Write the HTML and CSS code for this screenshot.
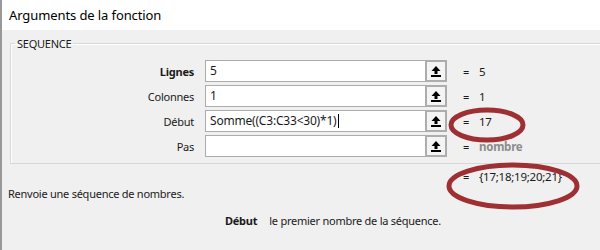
FILE: index.html
```html
<!DOCTYPE html>
<html>

<head>
    <title>Arguments de la fonction</title>
    <meta charset="UTF-8">
    <link rel="stylesheet" href="styles.css">
</head>

<body>
    <div class="dialog">
        <div class="titlebar">Arguments de la fonction</div>

        <div class="content">
            <fieldset class="group">
                <legend>SEQUENCE</legend>

                <div class="arg-row">
                    <label class="arg-label bold">Lignes</label>
                    <div class="arg-input">5</div>
                    <button class="ref-btn" title="Réduire">
                        <svg width="10" height="11" viewBox="0 0 10 11"><path d="M5 0 L9.5 5 H6.5 V8 H3.5 V5 H0.5 Z" fill="#000"/><rect x="0" y="9" width="10" height="2" fill="#000"/></svg>
                    </button>
                    <span class="eq">=</span>
                    <span class="arg-value">5</span>
                </div>

                <div class="arg-row">
                    <label class="arg-label">Colonnes</label>
                    <div class="arg-input">1</div>
                    <button class="ref-btn" title="Réduire">
                        <svg width="10" height="11" viewBox="0 0 10 11"><path d="M5 0 L9.5 5 H6.5 V8 H3.5 V5 H0.5 Z" fill="#000"/><rect x="0" y="9" width="10" height="2" fill="#000"/></svg>
                    </button>
                    <span class="eq">=</span>
                    <span class="arg-value">1</span>
                </div>

                <div class="arg-row">
                    <label class="arg-label">Début</label>
                    <div class="arg-input">Somme((C3:C33&lt;30)*1)<span class="caret"></span></div>
                    <button class="ref-btn" title="Réduire">
                        <svg width="10" height="11" viewBox="0 0 10 11"><path d="M5 0 L9.5 5 H6.5 V8 H3.5 V5 H0.5 Z" fill="#000"/><rect x="0" y="9" width="10" height="2" fill="#000"/></svg>
                    </button>
                    <span class="eq">=</span>
                    <span class="arg-value">17</span>
                </div>

                <div class="arg-row">
                    <label class="arg-label">Pas</label>
                    <div class="arg-input"></div>
                    <button class="ref-btn" title="Réduire">
                        <svg width="10" height="11" viewBox="0 0 10 11"><path d="M5 0 L9.5 5 H6.5 V8 H3.5 V5 H0.5 Z" fill="#000"/><rect x="0" y="9" width="10" height="2" fill="#000"/></svg>
                    </button>
                    <span class="eq">=</span>
                    <span class="arg-value hint">nombre</span>
                </div>
            </fieldset>

            <div class="result">
                <span class="eq">=</span>
                <span class="arg-value">{17;18;19;20;21}</span>
            </div>

            <p class="desc">Renvoie une séquence de nombres.</p>

            <p class="arg-desc"><b>Début</b><span>le premier nombre de la séquence.</span></p>

            <!-- annotations rouges -->
            <svg class="marks" width="600" height="220">
                <ellipse cx="487" cy="89" rx="36" ry="15" />
                <ellipse cx="513" cy="150" rx="64" ry="21" />
            </svg>
        </div>
    </div>
</body>

</html>
```

FILE: styles.css
```css
body {
    margin: 0;
    font-family: "Noto Sans", "Open Sans", sans-serif;
    font-size: 11px;
    letter-spacing: -0.25px;
    color: #1a1a1a;
    overflow: hidden;
}
.dialog {
    width: 598px;
    height: 250px;
    border-left: 2px solid #999;
    background: #f0f0f0;
}
.titlebar {
    height: 30px;
    line-height: 30px;
    padding-left: 7px;
    background: white;
    font-size: 13px;
    letter-spacing: -0.1px;
    color: #000;
}
.content {
    position: relative;
    height: 220px;
}
.group {
    margin: 6px -30px 0 8px;
    padding: 9px 0 3px 0;
    border: 1px solid #d8d8d8;
    box-shadow: inset 1px 1px 0 #fff;
}
.group legend {
    padding: 0 2px;
    margin-left: 4px;
    font-size: 11px;
    color: #1a1a1a;
}
.arg-row {
    display: grid;
    grid-template-columns: 194px 220px 22px 32px auto;
    align-items: center;
    height: 22px;
    margin-bottom: 3px;
}
.arg-label {
    text-align: right;
    padding-right: 11px;
}
.bold {
    font-weight: bold;
}
.arg-input {
    height: 20px;
    line-height: 20px;
    border: 1px solid #acacac;
    border-right: none;
    background: white;
    padding-left: 4px;
    font-size: 12px;
    letter-spacing: -0.2px;
    white-space: nowrap;
    overflow: hidden;
}
.caret {
    display: inline-block;
    width: 1px;
    height: 14px;
    background: #000;
    vertical-align: -3px;
    margin-left: 1px;
}
.ref-btn {
    width: 22px;
    height: 22px;
    padding: 0;
    border: 2px solid #adadad;
    background: #f4f4f4;
    display: flex;
    align-items: center;
    justify-content: center;
}
.eq {
    padding-left: 16px;
}
.arg-value {
    font-size: 11.5px;
}
.hint {
    color: #8c8c8c;
    font-weight: bold;
}
.result {
    display: flex;
    padding-left: 461px;
    margin-top: 5px;
}
.result .eq {
    width: 16px;
    padding-left: 0;
}
.desc {
    margin: 2px 0 0 6px;
}
.arg-desc {
    margin: 12px 0 0 223px;
}
.arg-desc span {
    margin-left: 12px;
}
.marks {
    position: absolute;
    left: -2px;
    top: 0;
}
.marks ellipse {
    fill: none;
    stroke: #9e2f32;
    stroke-width: 5;
}
```
